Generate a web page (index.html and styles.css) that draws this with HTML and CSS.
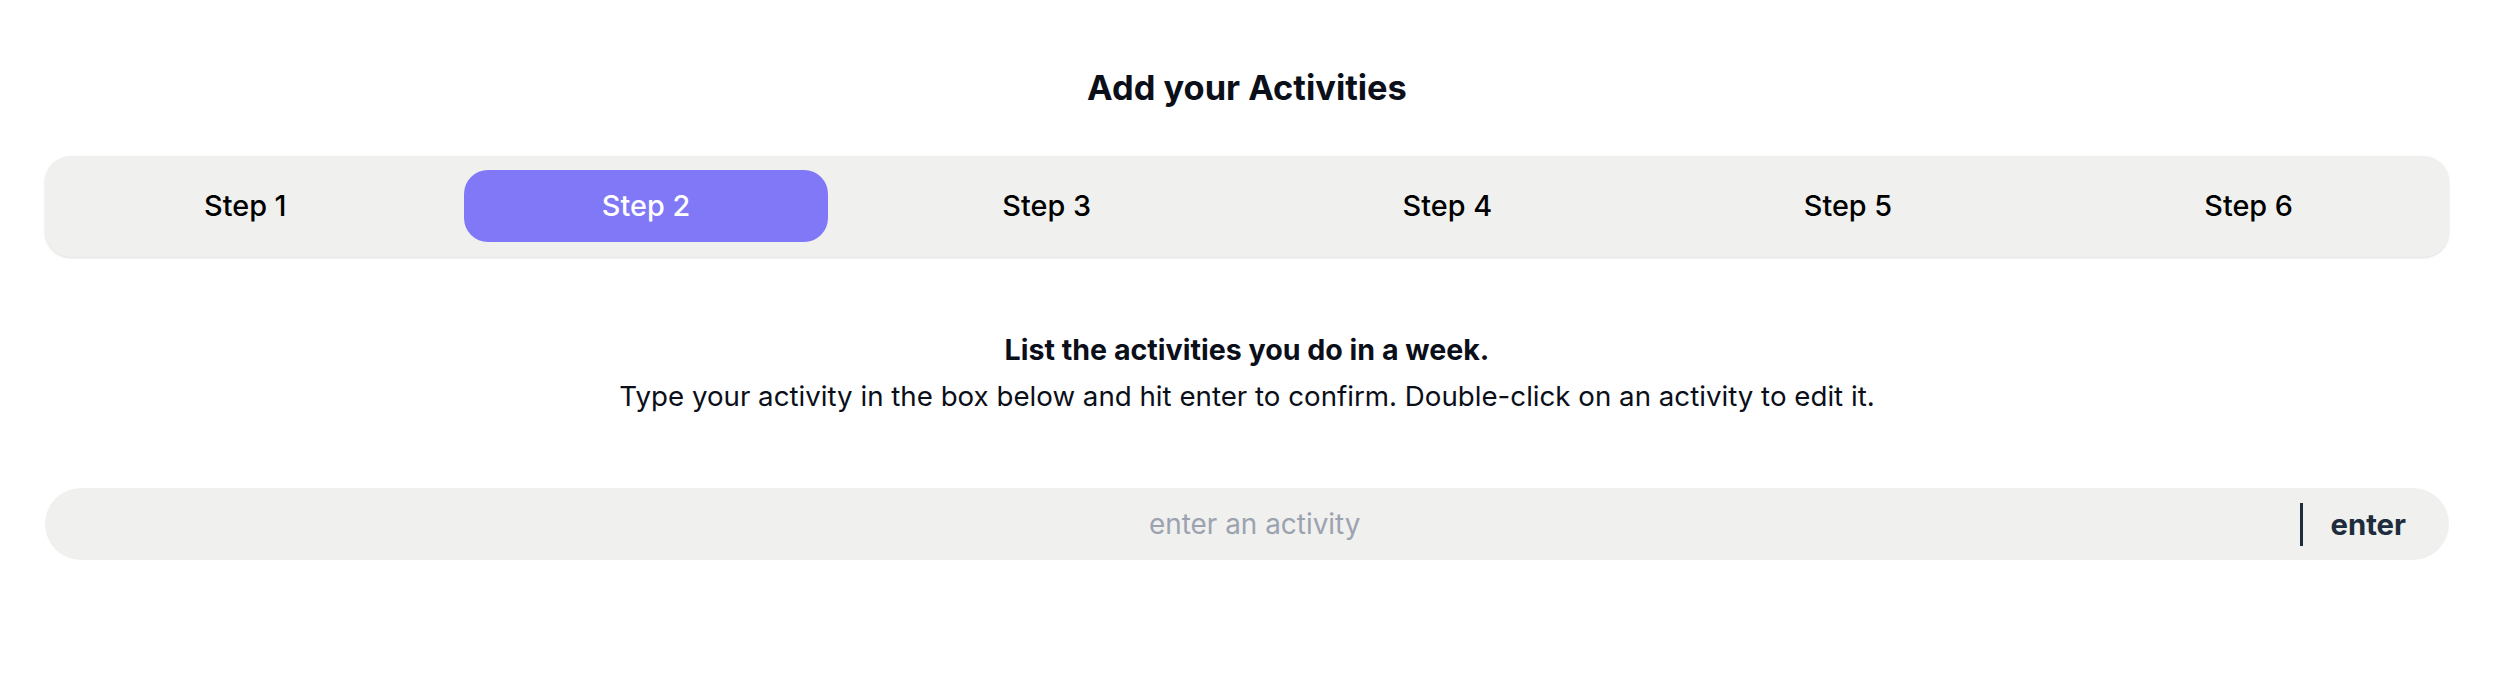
FILE: index.html
```html
<!DOCTYPE html>
<html lang="en">
<head>
<meta charset="utf-8">
<title>Add your Activities</title>
<link rel="stylesheet" href="styles.css">
</head>
<body>
<main class="page">
  <h1 class="title">Add your Activities</h1>
  <nav class="steps">
    <div class="step"><span class="step-btn">Step 1</span></div>
    <div class="step"><span class="step-btn is-active">Step 2</span></div>
    <div class="step"><span class="step-btn">Step 3</span></div>
    <div class="step"><span class="step-btn">Step 4</span></div>
    <div class="step"><span class="step-btn">Step 5</span></div>
    <div class="step"><span class="step-btn">Step 6</span></div>
  </nav>
  <section class="instructions">
    <p class="lead">List the activities you do in a week.</p>
    <p class="hint">Type your activity in the box below and hit enter to confirm. Double-click on an activity to edit it.</p>
  </section>
  <form class="entry">
    <input class="entry-input" type="text" placeholder="enter an activity">
    <button class="entry-btn" type="button">enter</button>
  </form>
</main>
</body>
</html>
```
FILE: styles.css
```css
* { box-sizing: border-box; }
html, body { margin: 0; padding: 0; background: #ffffff; }
body {
  font-family: Inter, "Noto Sans", "Liberation Sans", sans-serif;
  font-size: 28px;
  line-height: 1.5;
  color: #0b0f19;
}
.page {
  padding: 64px 51px 0 45px;
}
.title {
  margin: 0;
  font-size: 34.4px;
  font-weight: 700;
  line-height: 48px;
  text-align: center;
  color: #0b0f19;
}
.steps {
  margin-top: 44px;
  display: grid;
  grid-template-columns: repeat(6, 1fr);
  padding: 14px 0 15px;
  background: #f0f0ef;
  border-radius: 26px;
  box-shadow: 0 1px 3px rgba(0,0,0,0.09), 0 1px 2px rgba(0,0,0,0.05);
}
.step {
  display: flex;
  justify-content: center;
  padding: 0 18px;
}
.step-btn {
  flex: 1;
  height: 72px;
  display: flex;
  align-items: center;
  justify-content: center;
  border-radius: 24px;
  font-size: 28.8px;
  font-weight: 500;
  color: #000000;
}
.step-btn.is-active {
  background: #8078f6;
  color: #ffffff;
}
.instructions {
  margin-top: 72px;
  text-align: center;
}
.lead {
  margin: 0;
  font-size: 28.6px;
  font-weight: 700;
  line-height: 42px;
}
.hint {
  margin: 4px 0 0;
  font-size: 27.7px;
  line-height: 42px;
}
.entry {
  margin: 71px 0 0;
  display: flex;
  align-items: center;
  height: 72px;
  background: #f0f0ef;
  border-radius: 36px;
}
.entry-input {
  flex: 1;
  min-width: 0;
  height: 100%;
  border: 0;
  outline: none;
  background: transparent;
  padding: 0 0 0 164px;
  font-family: inherit;
  font-size: 27.9px;
  text-align: center;
  color: #0b0f19;
}
.entry-input::placeholder { color: #9ca3af; opacity: 1; }
.entry-btn {
  border: 0;
  border-left: 3px solid #1e2d3d;
  background: transparent;
  height: 43px;
  padding: 0 43px 0 27px;
  font-family: inherit;
  font-size: 29.3px;
  font-weight: 700;
  line-height: 43px;
  color: #1e2d3d;
}
```
